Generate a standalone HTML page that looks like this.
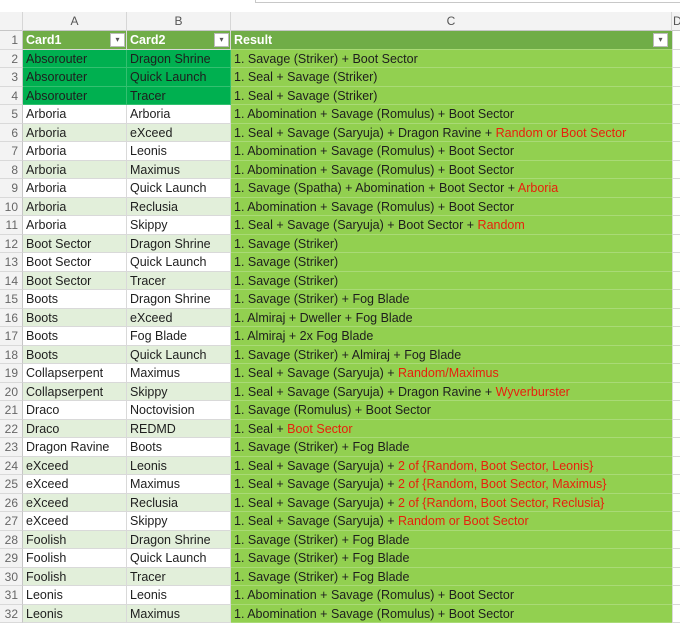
<!DOCTYPE html>
<html><head><style>
*{margin:0;padding:0;box-sizing:border-box}
body{width:680px;height:616px;overflow:hidden;background:#fff;font-family:"Liberation Sans",Arial,sans-serif;font-size:12.5px;color:#1e1e1e;position:relative}
.fb{position:absolute;left:255px;top:-10px;width:440px;height:13px;border:1px solid #c8c8c8;background:#fff}
.hdr{position:absolute;top:12px;left:0;width:680px;height:19px;background:#f3f3f3;border-bottom:1px solid #c6c6c6;color:#555;font-size:12px}
.hdr span{position:absolute;top:0;height:19px;line-height:19px;text-align:center;border-right:1px solid #d6d6d6}
.grid{position:absolute;top:31px;left:0;width:680px}
.r{height:18.5px;position:relative;white-space:nowrap}
.r>span{position:absolute;top:0;height:100%;line-height:18px;padding-left:3px;overflow:hidden;border-bottom:1px solid #d9d9d9}
.n{left:0;width:23px;background:#f3f3f3;color:#666;text-align:right;padding-right:4px !important;padding-left:0 !important;border-right:1px solid #c6c6c6;font-size:12px}
.a{left:23px;width:104px;border-right:1px solid #d9d9d9}
.b{left:127px;width:104px;border-right:1px solid #d9d9d9}
.c{left:231px;width:441px;background:#92d050;border-bottom-color:#a9da76 !important}
.d{left:672px;width:20px;border-left:1px solid #d9d9d9}
.g{background:#e2efda}
.dg{background:#00b050;border-bottom-color:#33c070 !important;border-right-color:#33c070 !important}
.h{background:#70ad47 !important;color:#fff;font-weight:bold}
.red{color:#e8200c}
.btn{position:absolute;top:2px;width:15px;height:14px;background:#fff;border:1px solid #bbb;color:#555;font-size:8px;line-height:12px;text-align:center;font-weight:normal;font-style:normal}
</style></head><body>
<div class="fb"></div>
<div class="hdr">
<span style="left:0;width:23px"></span>
<span style="left:23px;width:104px">A</span>
<span style="left:127px;width:104px">B</span>
<span style="left:231px;width:441px">C</span>
<span style="left:672px;width:20px;text-align:left;padding-left:1px;border:none">D</span>
</div>
<div class="grid">
<div class="r"><span class="n">1</span><span class="a h">Card1<i class="btn" style="left:87px">&#9662;</i></span><span class="b h">Card2<i class="btn" style="left:87px">&#9662;</i></span><span class="c h">Result<i class="btn" style="left:422px">&#9662;</i></span><span class="d"></span></div>
<div class="r"><span class="n">2</span><span class="a dg">Absorouter</span><span class="b dg">Dragon Shrine</span><span class="c">1. Savage (Striker) + Boot Sector</span><span class="d"></span></div>
<div class="r"><span class="n">3</span><span class="a dg">Absorouter</span><span class="b dg">Quick Launch</span><span class="c">1. Seal + Savage (Striker)</span><span class="d"></span></div>
<div class="r"><span class="n">4</span><span class="a dg">Absorouter</span><span class="b dg">Tracer</span><span class="c">1. Seal + Savage (Striker)</span><span class="d"></span></div>
<div class="r"><span class="n">5</span><span class="a">Arboria</span><span class="b">Arboria</span><span class="c">1. Abomination + Savage (Romulus) + Boot Sector</span><span class="d"></span></div>
<div class="r"><span class="n">6</span><span class="a g">Arboria</span><span class="b g">eXceed</span><span class="c">1. Seal + Savage (Saryuja) + Dragon Ravine + <span class="red">Random or Boot Sector</span></span><span class="d"></span></div>
<div class="r"><span class="n">7</span><span class="a">Arboria</span><span class="b">Leonis</span><span class="c">1. Abomination + Savage (Romulus) + Boot Sector</span><span class="d"></span></div>
<div class="r"><span class="n">8</span><span class="a g">Arboria</span><span class="b g">Maximus</span><span class="c">1. Abomination + Savage (Romulus) + Boot Sector</span><span class="d"></span></div>
<div class="r"><span class="n">9</span><span class="a">Arboria</span><span class="b">Quick Launch</span><span class="c">1. Savage (Spatha) + Abomination + Boot Sector + <span class="red">Arboria</span></span><span class="d"></span></div>
<div class="r"><span class="n">10</span><span class="a g">Arboria</span><span class="b g">Reclusia</span><span class="c">1. Abomination + Savage (Romulus) + Boot Sector</span><span class="d"></span></div>
<div class="r"><span class="n">11</span><span class="a">Arboria</span><span class="b">Skippy</span><span class="c">1. Seal + Savage (Saryuja) + Boot Sector + <span class="red">Random</span></span><span class="d"></span></div>
<div class="r"><span class="n">12</span><span class="a g">Boot Sector</span><span class="b g">Dragon Shrine</span><span class="c">1. Savage (Striker)</span><span class="d"></span></div>
<div class="r"><span class="n">13</span><span class="a">Boot Sector</span><span class="b">Quick Launch</span><span class="c">1. Savage (Striker)</span><span class="d"></span></div>
<div class="r"><span class="n">14</span><span class="a g">Boot Sector</span><span class="b g">Tracer</span><span class="c">1. Savage (Striker)</span><span class="d"></span></div>
<div class="r"><span class="n">15</span><span class="a">Boots</span><span class="b">Dragon Shrine</span><span class="c">1. Savage (Striker) + Fog Blade</span><span class="d"></span></div>
<div class="r"><span class="n">16</span><span class="a g">Boots</span><span class="b g">eXceed</span><span class="c">1. Almiraj + Dweller + Fog Blade</span><span class="d"></span></div>
<div class="r"><span class="n">17</span><span class="a">Boots</span><span class="b">Fog Blade</span><span class="c">1. Almiraj + 2x Fog Blade</span><span class="d"></span></div>
<div class="r"><span class="n">18</span><span class="a g">Boots</span><span class="b g">Quick Launch</span><span class="c">1. Savage (Striker) + Almiraj + Fog Blade</span><span class="d"></span></div>
<div class="r"><span class="n">19</span><span class="a">Collapserpent</span><span class="b">Maximus</span><span class="c">1. Seal + Savage (Saryuja) + <span class="red">Random/Maximus</span></span><span class="d"></span></div>
<div class="r"><span class="n">20</span><span class="a g">Collapserpent</span><span class="b g">Skippy</span><span class="c">1. Seal + Savage (Saryuja) + Dragon Ravine + <span class="red">Wyverburster</span></span><span class="d"></span></div>
<div class="r"><span class="n">21</span><span class="a">Draco</span><span class="b">Noctovision</span><span class="c">1. Savage (Romulus) + Boot Sector</span><span class="d"></span></div>
<div class="r"><span class="n">22</span><span class="a g">Draco</span><span class="b g">REDMD</span><span class="c">1. Seal + <span class="red">Boot Sector</span></span><span class="d"></span></div>
<div class="r"><span class="n">23</span><span class="a">Dragon Ravine</span><span class="b">Boots</span><span class="c">1. Savage (Striker) + Fog Blade</span><span class="d"></span></div>
<div class="r"><span class="n">24</span><span class="a g">eXceed</span><span class="b g">Leonis</span><span class="c">1. Seal + Savage (Saryuja) + <span class="red">2 of {Random, Boot Sector, Leonis}</span></span><span class="d"></span></div>
<div class="r"><span class="n">25</span><span class="a">eXceed</span><span class="b">Maximus</span><span class="c">1. Seal + Savage (Saryuja) + <span class="red">2 of {Random, Boot Sector, Maximus}</span></span><span class="d"></span></div>
<div class="r"><span class="n">26</span><span class="a g">eXceed</span><span class="b g">Reclusia</span><span class="c">1. Seal + Savage (Saryuja) + <span class="red">2 of {Random, Boot Sector, Reclusia}</span></span><span class="d"></span></div>
<div class="r"><span class="n">27</span><span class="a">eXceed</span><span class="b">Skippy</span><span class="c">1. Seal + Savage (Saryuja) + <span class="red">Random or Boot Sector</span></span><span class="d"></span></div>
<div class="r"><span class="n">28</span><span class="a g">Foolish</span><span class="b g">Dragon Shrine</span><span class="c">1. Savage (Striker) + Fog Blade</span><span class="d"></span></div>
<div class="r"><span class="n">29</span><span class="a">Foolish</span><span class="b">Quick Launch</span><span class="c">1. Savage (Striker) + Fog Blade</span><span class="d"></span></div>
<div class="r"><span class="n">30</span><span class="a g">Foolish</span><span class="b g">Tracer</span><span class="c">1. Savage (Striker) + Fog Blade</span><span class="d"></span></div>
<div class="r"><span class="n">31</span><span class="a">Leonis</span><span class="b">Leonis</span><span class="c">1. Abomination + Savage (Romulus) + Boot Sector</span><span class="d"></span></div>
<div class="r"><span class="n">32</span><span class="a g">Leonis</span><span class="b g">Maximus</span><span class="c">1. Abomination + Savage (Romulus) + Boot Sector</span><span class="d"></span></div>
</div>
</body></html>
